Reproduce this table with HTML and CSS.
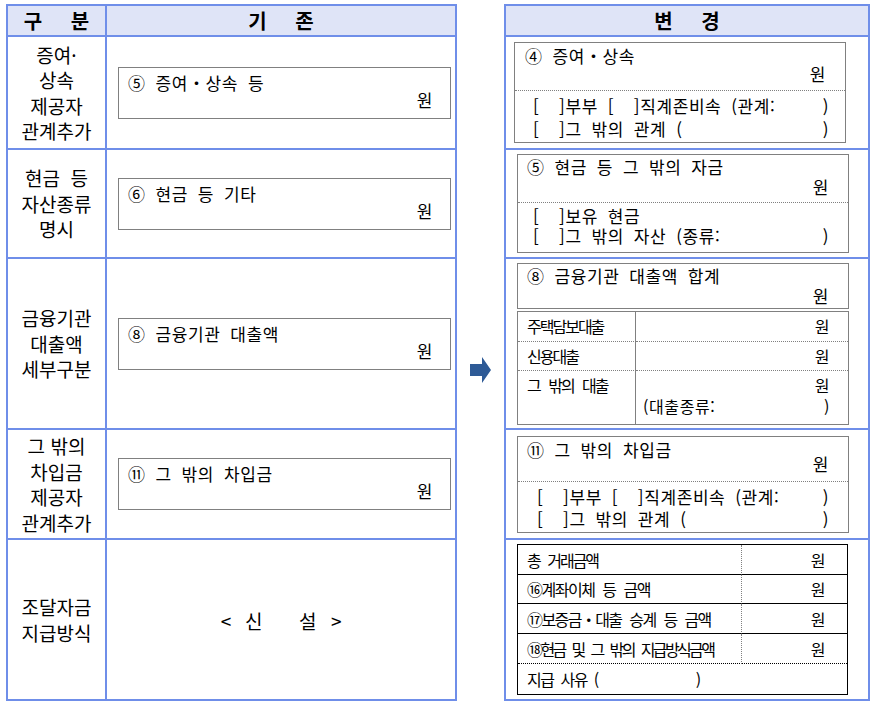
FILE: index.html
```html
<!DOCTYPE html>
<html lang="ko">
<head>
<meta charset="utf-8">
<title>변경 비교</title>
<link rel="stylesheet" href="styles.css">
</head>
<body>
<div class="page">
  <div class="tbl old">
    <div class="hd">구 분</div>
    <div class="hd">기 존</div>

    <div class="cat">증여·<br>상속<br>제공자<br>관계추가</div>
    <div class="cell"><div class="obox"><div>⑤ 증여・상속 등</div><div class="won">원</div></div></div>

    <div class="cat">현금 &nbsp;등<br>자산종류<br>명시</div>
    <div class="cell"><div class="obox"><div>⑥ 현금 등 기타</div><div class="won">원</div></div></div>

    <div class="cat">금융기관<br>대출액<br>세부구분</div>
    <div class="cell"><div class="obox"><div>⑧ 금융기관 대출액</div><div class="won">원</div></div></div>

    <div class="cat">그 밖의<br>차입금<br>제공자<br>관계추가</div>
    <div class="cell"><div class="obox"><div>⑪ 그 밖의 차입금</div><div class="won">원</div></div></div>

    <div class="cat">조달자금<br>지급방식</div>
    <div class="cell center"><div class="sinseol"><span>&lt;</span><span>신</span><span>설</span><span>&gt;</span></div></div>
  </div>

  <div class="mid">
    <svg class="arrow" width="21" height="26" viewBox="0 0 21 26"><polygon points="0,7 12,7 12,0 21,13 12,26 12,19 0,19" fill="#2e5a96"/></svg>
  </div>

  <div class="tbl new">
    <div class="hd">변 경</div>

    <div class="cell">
      <div class="nbox b1">
        <div class="top"><div>④ 증여・상속</div><div class="won">원</div></div>
        <div class="bot">
          <div class="ln"><span>[  ]부부 [  ]직계존비속 (관계:</span><span>)</span></div>
          <div class="ln"><span>[  ]그 밖의 관계 (</span><span>)</span></div>
        </div>
      </div>
    </div>

    <div class="cell">
      <div class="nbox b2">
        <div class="top"><div>⑤ 현금 등 그 밖의 자금</div><div class="won">원</div></div>
        <div class="bot">
          <div class="ln"><span>[  ]보유 현금</span></div>
          <div class="ln"><span>[  ]그 밖의 자산 (종류:</span><span>)</span></div>
        </div>
      </div>
    </div>

    <div class="cell">
      <div class="nbox b3">
        <div class="top"><div>⑧ 금융기관 대출액 합계</div><div class="won">원</div></div>
      </div>
      <div class="ltbl">
        <div class="lc">주택담보대출</div><div class="rc">원</div>
        <div class="lc">신용대출</div><div class="rc">원</div>
        <div class="lc last">그 밖의 대출</div>
        <div class="rc last"><div class="won">원</div><div class="ln"><span>(대출종류:</span><span>)</span></div></div>
      </div>
    </div>

    <div class="cell">
      <div class="nbox b4">
        <div class="top"><div>⑪ 그 밖의 차입금</div><div class="won">원</div></div>
        <div class="bot">
          <div class="ln"><span>[  ]부부 [  ]직계존비속 (관계:</span><span>)</span></div>
          <div class="ln"><span>[  ]그 밖의 관계 (</span><span>)</span></div>
        </div>
      </div>
    </div>

    <div class="cell">
      <div class="btbl">
        <div class="bl t1">총 거래금액</div><div class="br">원</div>
        <div class="bl t2">⑯계좌이체 등 금액</div><div class="br">원</div>
        <div class="bl t3">⑰보증금・대출 승계 등 금액</div><div class="br">원</div>
        <div class="bl t4">⑱현금 및 그 밖의 지급방식금액</div><div class="br">원</div>
        <div class="bfull">지급 사유 (<span class="blank"></span>)</div>
      </div>
    </div>
  </div>
</div>
</body>
</html>
```

FILE: styles.css
```css
* { box-sizing: border-box; margin: 0; padding: 0; }
body {
  margin: 0;
  background: #fff;
  color: #000;
  font-family: "Noto Sans CJK KR", "Noto Sans", sans-serif;
}
.page { display: flex; padding: 4px 0 0 6px; }

.tbl {
  display: grid;
  background: #6f8ee9;
  padding: 2px;
  gap: 2px;
  grid-template-rows: 29px 111px 107px 169px 108px 159px;
}
.old { width: 451px; grid-template-columns: 97px 348px; }
.new { width: 366px; grid-template-columns: 362px; }

.mid { width: 47px; display: flex; justify-content: center; align-items: flex-start; padding-top: 353px; }
.arrow { display: block; }

.hd {
  background: #dfe4f7;
  display: flex;
  align-items: center;
  justify-content: center;
  font-weight: bold;
  font-size: 20px;
  line-height: 24px;
  word-spacing: 23px;
}
.cat {
  background: #fff;
  display: flex;
  flex-direction: column;
  justify-content: center;
  text-align: center;
  font-size: 19px;
  line-height: 25.5px;
}
.cell {
  background: #fff;
  display: flex;
  flex-direction: column;
  justify-content: center;
  font-size: 17px;
  letter-spacing: 0.6px;
  word-spacing: 4.5px;
}
.cell.center { align-items: center; }
.won { text-align: right; }
.ln { display: flex; justify-content: space-between; white-space: pre; }

/* old boxes */
.obox {
  margin-left: 11px;
  width: 333px;
  height: 52px;
  border: 1px solid #808080;
  padding: 6px 17px 0 9px;
  line-height: 17px;
}
.sinseol { display: flex; font-size: 19px; line-height: 24px; margin-top: 2px; margin-left: 1px; }
.sinseol span:nth-child(2) { margin-left: 13px; }
.sinseol span:nth-child(3) { margin-left: 36px; }
.sinseol span:nth-child(4) { margin-left: 14px; }

/* new boxes */
.nbox { margin-left: 11px; width: 332px; border: 1px solid #808080; }
.top { border-bottom: 1px dotted #808080; }
.b1 { margin-left: 8px; height: 101px; }
.b1 .top { height: 48px; padding: 4px 19px 0 10px; line-height: 18px; }
.b1 .bot { padding: 3px 16px 0 18px; line-height: 23px; }

.b2 { height: 99px; }
.b2 .top { height: 48px; padding: 2px 19px 0 9px; line-height: 20px; }
.b2 .bot { padding: 3px 19px 0 15px; line-height: 20px; }

.b3 { height: 46px; }
.b3 .top { border-bottom: 0; padding: 2px 19px 0 9px; line-height: 20px; }

.b4 { height: 97px; }
.b4 .top { height: 45px; padding: 6px 19px 0 9px; line-height: 14px; }
.b4 .bot { padding: 4px 19px 0 19px; line-height: 22px; }

.ltbl {
  margin: 2px 0 0 11px;
  width: 332px;
  height: 114px;
  border: 1px solid #808080;
  display: grid;
  grid-template-columns: 118px 212px;
  grid-template-rows: 30px 29px 53px;
  font-size: 16px;
  word-spacing: 0;
}
.lc {
  border-right: 1px solid #808080;
  border-bottom: 1px dotted #808080;
  padding-left: 9px;
  display: flex;
  align-items: center;
  letter-spacing: -2px;
  white-space: nowrap;
}
.rc {
  border-bottom: 1px dotted #808080;
  padding: 0 18px 0 7px;
  display: flex;
  align-items: center;
  justify-content: flex-end;
}
.lc.last { border-bottom: 0; align-items: flex-start; padding-top: 4px; line-height: 21px; word-spacing: 6px; }
.rc.last { border-bottom: 0; display: block; padding-top: 4px; line-height: 21px; }

.btbl {
  margin-left: 11px;
  width: 331px;
  height: 151px;
  border: 1px solid #000;
  display: grid;
  grid-template-columns: 224px 105px;
  grid-template-rows: 30px 29px 30px 30px 30px;
  font-size: 16px;
  word-spacing: 0;
}
.bl, .br {
  border-bottom: 1px solid #000;
  display: flex;
  align-items: center;
  white-space: nowrap;
}
.bl { padding-left: 9px; border-right: 1px dotted #808080; }
.br { justify-content: flex-end; padding-right: 21px; }
.btbl > .br:nth-child(8) { border-bottom: 1px dotted #000; }
.btbl > .bl:nth-child(7) { border-bottom: 1px dotted #000; }
.t1 { letter-spacing: -2px; word-spacing: 5px; }
.t2 { letter-spacing: -1.5px; word-spacing: 5px; }
.t3 { letter-spacing: -1.6px; word-spacing: 5px; }
.t4 { letter-spacing: -2.6px; word-spacing: 5px; }
.bfull {
  grid-column: 1 / 3;
  padding-left: 9px;
  display: flex;
  align-items: center;
  letter-spacing: -1.5px;
  word-spacing: 4px;
  white-space: nowrap;
}
.blank { display: inline-block; width: 98px; }
```
